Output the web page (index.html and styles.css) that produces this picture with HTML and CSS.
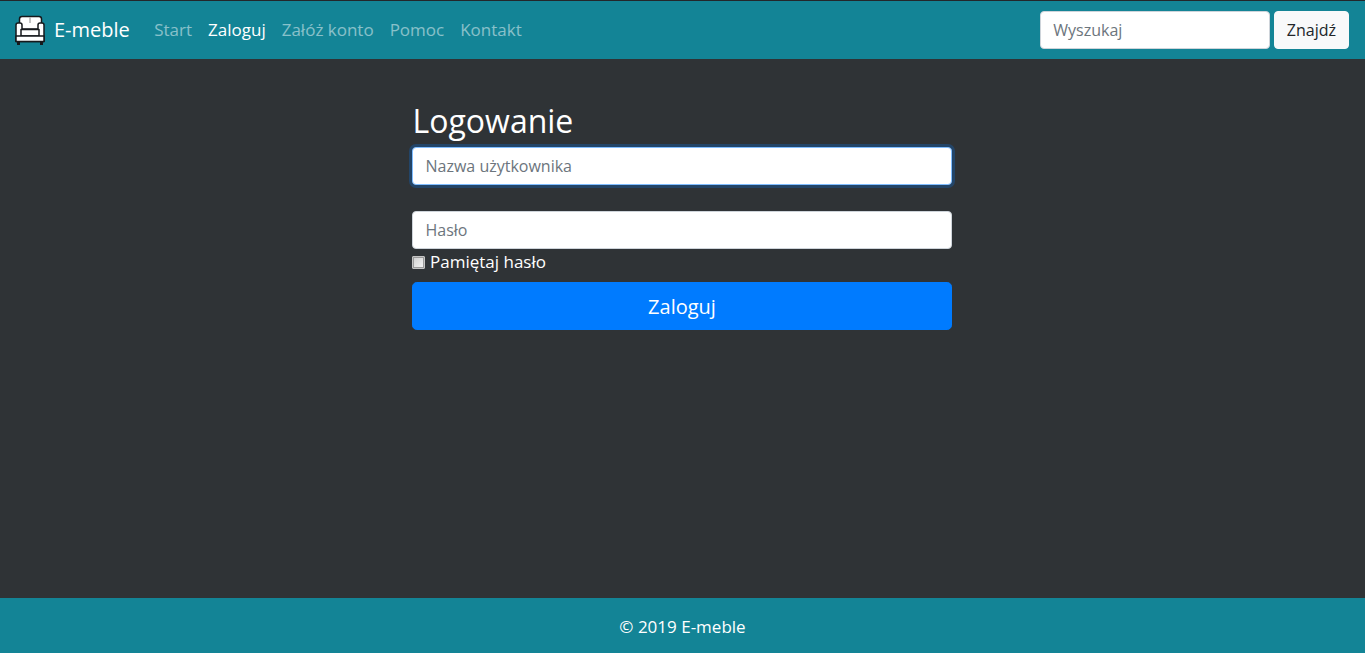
FILE: index.html
```html
<!DOCTYPE html>
<html lang="pl">
<head>
<meta charset="utf-8">
<title>E-meble</title>
<link rel="stylesheet" href="styles.css">
</head>
<body>
<nav class="navbar">
  <a class="brand" href="#">
    <svg class="brand-icon" width="32" height="30" viewBox="0 0 32 30" aria-hidden="true">
      <path class="sofa-part" d="M5.500 15V4Q5.500 1.500 8 1.500H25Q27.500 1.500 27.500 4V15Z"/>
      <path class="sofa-part" d="M2 10Q2 8 4 8H6Q8 8 8 10V14H24V10Q24 8 26 8H28Q30 8 30 10V26.500H2Z"/>
      <path class="sofa-part" d="M7 14.500H25V21H7Z"/>
      <path class="sofa-part" d="M2 21H30V26.500H2Z"/>
      <path class="sofa-crease" d="M16 2.500V8"/>
      <rect class="sofa-foot" x="3" y="27" width="3" height="3"/>
      <rect class="sofa-foot" x="26" y="27" width="3" height="3"/>
    </svg>
    <span>E-meble</span>
  </a>
  <ul class="nav-links">
    <li><a href="#">Start</a></li>
    <li><a class="active" href="#">Zaloguj</a></li>
    <li><a href="#">Załóż konto</a></li>
    <li><a href="#">Pomoc</a></li>
    <li><a href="#">Kontakt</a></li>
  </ul>
  <form class="search">
    <input class="control search-input" type="text" placeholder="Wyszukaj">
    <button class="search-btn" type="button">Znajdź</button>
  </form>
</nav>
<main class="content">
  <form class="login">
    <h2>Logowanie</h2>
    <input class="control focused" type="text" placeholder="Nazwa użytkownika">
    <input class="control second" type="password" placeholder="Hasło">
    <label class="remember"><input type="checkbox"><span>Pamiętaj hasło</span></label>
    <button class="submit" type="button">Zaloguj</button>
  </form>
</main>
<footer class="footer">© 2019 E-meble</footer>
</body>
</html>
```
FILE: styles.css
```css
* { box-sizing: border-box; }
html, body { height: 100%; }
body {
  margin: 0;
  display: flex;
  flex-direction: column;
  background: #2f3336;
  color: #fff;
  font-family: "Open Sans", "Noto Sans", sans-serif;
  font-size: 17px;
  line-height: 24px;
  border-top: 1px solid #23272b;
}
a { text-decoration: none; }
.navbar {
  height: 58px;
  flex: none;
  display: flex;
  align-items: center;
  padding: 0 16px;
  background: #138496;
}
.brand {
  display: flex;
  align-items: center;
  gap: 8px;
  color: #fff;
  font-size: 20px;
  margin-right: 16px;
  margin-left: -2px;
}
.brand-icon { display: block; }
.sofa-part { fill: #fff; stroke: #16191c; stroke-width: 1.5; stroke-linejoin: round; }
.sofa-crease { fill: none; stroke: #8a8a8a; stroke-width: 1; }
.sofa-foot { fill: #16191c; }
.nav-links {
  display: flex;
  list-style: none;
  margin: 0 0 0 .4px;
  padding: 0;
}
.nav-links a {
  display: block;
  padding: 8px;
  color: rgba(255,255,255,.5);
}
.nav-links a.active { color: #fff; }
.search {
  margin-left: auto;
  display: flex;
  gap: 4px;
}
.control {
  display: block;
  height: 38px;
  width: 100%;
  padding: 6px 12px 6px 12.5px;
  font: inherit;
  font-size: 16px;
  color: #495057;
  background: #fff;
  border: 1px solid #ced4da;
  border-radius: 4px;
  outline: 0;
}
.control::placeholder { color: #6c757d; opacity: 1; }
.search-input { width: 230px; }
.search-btn {
  height: 38px;
  padding: 6px 12px;
  font: inherit;
  font-size: 16px;
  color: #212529;
  background: #f8f9fa;
  border: 1px solid #f8f9fa;
  border-radius: 4px;
}
.content {
  flex: 1;
  display: flex;
  justify-content: center;
}
.login { width: 541px; padding: 38px 1px 0 0; }
h2 {
  margin: 0 0 2px;
  padding-left: .5px;
  font-size: 32px;
  font-weight: 400;
  line-height: 48px;
}
.focused {
  border-color: #80bdff;
  box-shadow: 0 0 0 3px rgba(0,123,255,.25);
}
.second { margin-top: 26px; }
.remember {
  display: flex;
  align-items: center;
  height: 24px;
  margin-top: 1px;
}
.remember input {
  appearance: none;
  width: 13px;
  height: 13px;
  margin: 0 5px 0 0;
  border: 1px solid #c4c4c4;
  border-radius: 1px;
  background: linear-gradient(135deg, #cfcfcf, #f6f6f6);
  box-shadow: inset 0 0 0 1px #9a9a9a;
}
.submit {
  display: block;
  width: 100%;
  height: 48px;
  margin-top: 8px;
  padding: 2px 0 0;
  font: inherit;
  font-size: 20px;
  color: #fff;
  background: #007bff;
  border: 1px solid #007bff;
  border-radius: 4.8px;
}
.footer {
  flex: none;
  height: 55px;
  display: flex;
  align-items: center;
  justify-content: center;
  background: #138496;
  padding-top: 2px;
}
```
